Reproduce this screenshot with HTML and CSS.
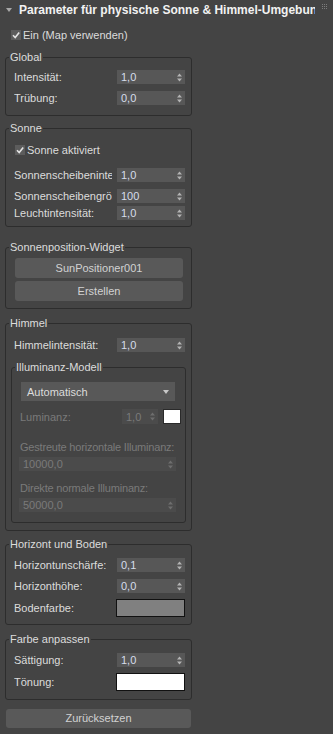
FILE: index.html
```html
<!DOCTYPE html>
<html lang="de">

<head>
  <meta charset="UTF-8" />
  <meta name="viewport" content="width=device-width, initial-scale=1.0" />
  <title>Parameter für physische Sonne &amp; Himmel-Umgebung</title>

  <link rel="stylesheet" href="styles.css">
</head>

<body>

  <div class="rollout">

    <div class="head">
      <svg class="caret" viewBox="0 0 6 4"><path d="M0 0 H6 L3 4 Z" /></svg>
      <span class="title">Parameter für physische Sonne &amp; Himmel-Umgebung</span>
      <svg class="grip" viewBox="0 0 5 5">
        <rect x="0" y="0" width="1" height="1" /><rect x="2" y="0" width="1" height="1" /><rect x="4" y="0" width="1" height="1" />
        <rect x="0" y="2" width="1" height="1" /><rect x="2" y="2" width="1" height="1" /><rect x="4" y="2" width="1" height="1" />
        <rect x="0" y="4" width="1" height="1" /><rect x="2" y="4" width="1" height="1" /><rect x="4" y="4" width="1" height="1" />
      </svg>
    </div>

    <div class="content">

      <label class="check check--top">
        <span class="box"><svg viewBox="0 0 10 10"><path d="M2 5.2 L4.2 7.5 L8.2 2.4" /></svg></span>
        Ein (Map verwenden)
      </label>

      <fieldset class="group group--global">
        <legend>Global</legend>
        <div class="row mt6">
          <span class="lbl">Intensität:</span>
          <span class="spin">1,0<svg class="arr" viewBox="0 0 5 9"><path d="M0 3.5 L2.5 0.5 L5 3.5 Z M0 5.5 L2.5 8.5 L5 5.5 Z" /></svg></span>
        </div>
        <div class="row mt7">
          <span class="lbl">Trübung:</span>
          <span class="spin">0,0<svg class="arr" viewBox="0 0 5 9"><path d="M0 3.5 L2.5 0.5 L5 3.5 Z M0 5.5 L2.5 8.5 L5 5.5 Z" /></svg></span>
        </div>
      </fieldset>

      <fieldset class="group group--sun">
        <legend>Sonne</legend>
        <label class="check check--inner mt8">
          <span class="box"><svg viewBox="0 0 10 10"><path d="M2 5.2 L4.2 7.5 L8.2 2.4" /></svg></span>
          Sonne aktiviert
        </label>
        <div class="row mt11">
          <span class="lbl">Sonnenscheibenintensität:</span>
          <span class="spin">1,0<svg class="arr" viewBox="0 0 5 9"><path d="M0 3.5 L2.5 0.5 L5 3.5 Z M0 5.5 L2.5 8.5 L5 5.5 Z" /></svg></span>
        </div>
        <div class="row mt7">
          <span class="lbl">Sonnenscheibengröße:</span>
          <span class="spin">100<svg class="arr" viewBox="0 0 5 9"><path d="M0 3.5 L2.5 0.5 L5 3.5 Z M0 5.5 L2.5 8.5 L5 5.5 Z" /></svg></span>
        </div>
        <div class="row mt3">
          <span class="lbl">Leuchtintensität:</span>
          <span class="spin">1,0<svg class="arr" viewBox="0 0 5 9"><path d="M0 3.5 L2.5 0.5 L5 3.5 Z M0 5.5 L2.5 8.5 L5 5.5 Z" /></svg></span>
        </div>
      </fieldset>

      <fieldset class="group group--widget">
        <legend>Sonnenposition-Widget</legend>
        <div class="btn btn--inner mt4">SunPositioner001</div>
        <div class="btn btn--inner mt3">Erstellen</div>
      </fieldset>

      <fieldset class="group group--sky">
        <legend>Himmel</legend>
        <div class="row mt8">
          <span class="lbl">Himmelintensität:</span>
          <span class="spin">1,0<svg class="arr" viewBox="0 0 5 9"><path d="M0 3.5 L2.5 0.5 L5 3.5 Z M0 5.5 L2.5 8.5 L5 5.5 Z" /></svg></span>
        </div>

        <fieldset class="group group--inner mt8">
          <legend>Illuminanz-Modell</legend>
          <div class="combo mt8">
            <span>Automatisch</span>
            <svg class="combo-arr" viewBox="0 0 6 4"><path d="M0 0 H6 L3 4 Z" /></svg>
          </div>
          <div class="row row--lum mt8">
            <span class="lbl lbl--lum is-off">Luminanz:</span>
            <span class="spin spin--small is-off">1,0<svg class="arr" viewBox="0 0 5 9"><path d="M0 3.5 L2.5 0.5 L5 3.5 Z M0 5.5 L2.5 8.5 L5 5.5 Z" /></svg></span>
            <span class="swatch swatch--lum"></span>
          </div>
          <div class="caption is-off mt16">Gestreute horizontale Illuminanz:</div>
          <span class="spin spin--wide is-off mt3">10000,0<svg class="arr" viewBox="0 0 5 9"><path d="M0 3.5 L2.5 0.5 L5 3.5 Z M0 5.5 L2.5 8.5 L5 5.5 Z" /></svg></span>
          <div class="caption is-off mt10">Direkte normale Illuminanz:</div>
          <span class="spin spin--wide is-off mt3">50000,0<svg class="arr" viewBox="0 0 5 9"><path d="M0 3.5 L2.5 0.5 L5 3.5 Z M0 5.5 L2.5 8.5 L5 5.5 Z" /></svg></span>
        </fieldset>
      </fieldset>

      <fieldset class="group group--horizon">
        <legend>Horizont und Boden</legend>
        <div class="row mt7">
          <span class="lbl">Horizontunschärfe:</span>
          <span class="spin">0,1<svg class="arr" viewBox="0 0 5 9"><path d="M0 3.5 L2.5 0.5 L5 3.5 Z M0 5.5 L2.5 8.5 L5 5.5 Z" /></svg></span>
        </div>
        <div class="row mt7">
          <span class="lbl">Horizonthöhe:</span>
          <span class="spin">0,0<svg class="arr" viewBox="0 0 5 9"><path d="M0 3.5 L2.5 0.5 L5 3.5 Z M0 5.5 L2.5 8.5 L5 5.5 Z" /></svg></span>
        </div>
        <div class="row row--color mt6">
          <span class="lbl">Bodenfarbe:</span>
          <span class="swatch swatch--ground"></span>
        </div>
      </fieldset>

      <fieldset class="group group--tint">
        <legend>Farbe anpassen</legend>
        <div class="row mt7">
          <span class="lbl">Sättigung:</span>
          <span class="spin">1,0<svg class="arr" viewBox="0 0 5 9"><path d="M0 3.5 L2.5 0.5 L5 3.5 Z M0 5.5 L2.5 8.5 L5 5.5 Z" /></svg></span>
        </div>
        <div class="row row--color mt6">
          <span class="lbl">Tönung:</span>
          <span class="swatch swatch--tint"></span>
        </div>
      </fieldset>

      <div class="btn btn--reset">Zurücksetzen</div>

    </div>

  </div>

</body>

</html>
```

FILE: styles.css
```css
* {
  border: 0;
  box-sizing: border-box;
  margin: 0;
  padding: 0;
}
:root {
  --bg: #444444;
  --line: #2d2d2d;
  --text: #dcdcdc;
  --field: #575757;
  --field-off: #4b4b4b;
  --value: #d6ddeb;
  --off: #7a7a7a;
}
body {
  background-color: var(--bg);
  color: var(--text);
  font: 11px/14px "Liberation Sans", Arial, sans-serif;
  width: 333px;
  height: 734px;
  overflow: hidden;
}

/* Rollout header */
.head {
  display: flex;
  align-items: center;
  height: 20px;
}
.caret {
  fill: #a8a8a8;
  margin-left: 6px;
  width: 6px;
  height: 4px;
}
.title {
  color: #f2f2f2;
  font: bold 12px/20px "Liberation Sans", Arial, sans-serif;
  margin-left: 7px;
  overflow: hidden;
  white-space: nowrap;
  width: 296px;
}
.grip {
  align-self: flex-start;
  fill: #7c7c7c;
  margin: 4px 0 0 7px;
  width: 5px;
  height: 5px;
}

.content {
  padding-left: 5px;
  width: 192px;
}

/* Checkboxes */
.check {
  display: flex;
  align-items: center;
  gap: 2px;
  height: 14px;
  white-space: nowrap;
}
.check--top {
  margin: 8px 0 0 6px;
}
.check--inner {
  margin-left: 1px;
}
.box {
  background-color: #5c5c5c;
  display: block;
  width: 10px;
  height: 10px;
}
.box svg {
  display: block;
  fill: none;
  stroke: #e4e4e4;
  stroke-width: 1.6;
  width: 10px;
  height: 10px;
}

/* Group boxes */
.group {
  border: 1px solid var(--line);
  border-radius: 3px;
  min-width: 0;
  padding: 0 6px 0 8px;
  width: 187px;
}
.group legend {
  color: var(--text);
  line-height: 14px;
  margin-left: -5px;
  padding: 0 1px;
}
.group--global { margin-top: 8px; padding-bottom: 10px; }
.group--sun { margin-top: 5px; padding-bottom: 6px; }
.group--widget { margin-top: 13px; padding-bottom: 7px; }
.group--sky { margin-top: 7px; padding-bottom: 7px; }
.group--horizon { margin-top: 6px; padding-bottom: 7px; }
.group--tint { margin-top: 7px; padding-bottom: 8px; }
.group--inner {
  margin-left: -3px;
  margin-right: -1px;
  padding: 0 9px 10px 8px;
  width: auto;
}

/* Rows */
.row {
  display: flex;
  align-items: center;
  height: 14px;
}
.row--lum { height: 15px; }
.row--color { height: 18px; }
.lbl {
  flex-shrink: 0;
  margin-right: 5px;
  overflow: hidden;
  text-overflow: clip;
  white-space: nowrap;
  width: 98px;
}
.lbl--lum { width: 97px; }
.caption {
  letter-spacing: -0.2px;
  white-space: nowrap;
}
.is-off {
  color: var(--off);
}

/* Spinners */
.spin {
  background-color: var(--field);
  color: var(--value);
  display: flex;
  align-items: center;
  justify-content: space-between;
  flex-shrink: 0;
  height: 14px;
  padding: 0 3px 0 4px;
  width: 68px;
}
.spin .arr {
  fill: #b4b4b4;
  width: 5px;
  height: 9px;
}
.spin.is-off {
  background-color: var(--field-off);
  color: var(--off);
}
.spin.is-off .arr {
  fill: #6e6e6e;
}
.spin--small {
  height: 15px;
  width: 36px;
}
.spin--wide {
  margin-left: -1px;
  width: 157px;
}

/* Colour swatches */
.swatch {
  border: 1px solid #111;
  display: block;
  flex-shrink: 0;
}
.swatch--lum {
  background-color: #fff;
  border-color: #2a2a2a;
  margin-left: 5px;
  width: 18px;
  height: 15px;
}
.swatch--ground,
.swatch--tint {
  margin-left: -1px;
  width: 69px;
  height: 18px;
}
.swatch--ground { background-color: #808080; }
.swatch--tint { background-color: #fff; }

/* Dropdown */
.combo {
  background-color: #585858;
  display: flex;
  align-items: center;
  justify-content: space-between;
  height: 19px;
  margin: 0 1px 0 1px;
  padding: 0 6px 0 6px;
}
.combo-arr {
  fill: #c8c8c8;
  width: 6px;
  height: 4px;
}

/* Buttons */
.btn {
  background-color: #595959;
  border-radius: 3px;
  color: #d2d2d2;
  height: 20px;
  line-height: 20px;
  text-align: center;
}
.btn--inner {
  margin: 0 2px 0 1px;
}
.btn--reset {
  height: 19px;
  line-height: 19px;
  margin: 9px 0 0 1px;
  width: 185px;
}

/* Spacing helpers */
.mt3 { margin-top: 3px; }
.mt4 { margin-top: 4px; }
.mt6 { margin-top: 6px; }
.mt7 { margin-top: 7px; }
.mt8 { margin-top: 8px; }
.mt10 { margin-top: 10px; }
.mt11 { margin-top: 11px; }
.mt16 { margin-top: 16px; }
```
